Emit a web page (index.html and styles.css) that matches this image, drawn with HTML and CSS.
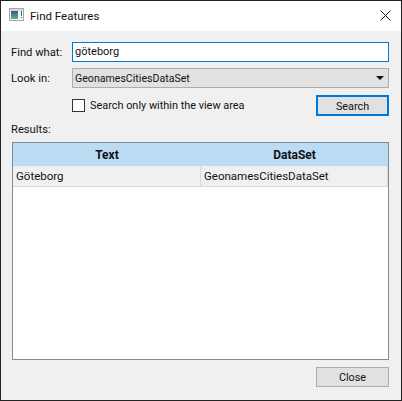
FILE: index.html
```html
<!DOCTYPE html>
<html lang="en">
<head>
    <meta charset="UTF-8">
    <meta name="viewport" content="width=device-width, initial-scale=1.0">
    <title>Find Features</title>
    <link rel="stylesheet" href="styles.css">
</head>
<body>
    <div class="window">
        <div class="titlebar">
            <svg class="app-icon" width="16" height="14" viewBox="0 0 16 14">
                <defs>
                    <linearGradient id="icon-fill" x1="0" y1="0" x2="0" y2="1">
                        <stop offset="0" stop-color="#3a5a72"/>
                        <stop offset="1" stop-color="#5fb59a"/>
                    </linearGradient>
                </defs>
                <rect x="0.5" y="0.5" width="14" height="12" fill="#f4f4f4" stroke="#a8a8a8"/>
                <rect x="1" y="1" width="13" height="2" fill="#d8d8d8"/>
                <rect x="2" y="3" width="7" height="8" fill="url(#icon-fill)"/>
                <rect x="12" y="3" width="1" height="5" fill="#2f6fa8"/>
                <rect x="12" y="9" width="1" height="1" fill="#2f6fa8"/>
            </svg>
            <span class="title">Find Features</span>
            <svg class="close-x" width="11" height="11" viewBox="0 0 11 11">
                <path d="M0.5 0.5L10.5 10.5M10.5 0.5L0.5 10.5" stroke="#111" stroke-width="1" fill="none"/>
            </svg>
        </div>
        <div class="content">
            <div class="form-row">
                <label class="form-label">Find what:</label>
                <div class="text-input">göteborg</div>
            </div>
            <div class="form-row">
                <label class="form-label">Look in:</label>
                <div class="combo">
                    <span>GeonamesCitiesDataSet</span>
                    <span class="combo-arrow"></span>
                </div>
            </div>
            <div class="options-row">
                <div class="checkbox"></div>
                <span class="checkbox-label">Search only within the view area</span>
                <button class="btn btn-default">Search</button>
            </div>
            <div class="results-label">Results:</div>
            <div class="table">
                <div class="table-head">
                    <div class="col-text">Text</div>
                    <div class="col-dataset">DataSet</div>
                </div>
                <div class="table-row">
                    <div class="col-text">Göteborg</div>
                    <div class="col-dataset">GeonamesCitiesDataSet</div>
                </div>
            </div>
            <div class="footer">
                <button class="btn">Close</button>
            </div>
        </div>
    </div>
</body>
</html>
```

FILE: styles.css
```css
html, body {
    margin: 0;
    padding: 0;
}
body {
    font-family: Roboto, "Open Sans", sans-serif;
    font-size: 11.5px;
    color: #111;
}
.window {
    width: 402px;
    height: 401px;
    box-sizing: border-box;
    border: 1px solid #222;
    display: flex;
    flex-direction: column;
    background: #f0f0f0;
}
.titlebar {
    height: 30px;
    background: #fff;
    display: flex;
    align-items: center;
    padding: 0 10px 0 8px;
    flex-shrink: 0;
}
.app-icon {
    margin-right: 5px;
    margin-bottom: 2px;
}
.title {
    flex: 1;
}
.close-x {
    margin-bottom: 1px;
}
.content {
    flex: 1;
    display: flex;
    flex-direction: column;
    padding: 11px 12px 13px 11px;
}
.form-row {
    display: flex;
    align-items: center;
    height: 20px;
    margin-bottom: 6px;
}
.form-label {
    width: 61px;
    margin-left: -1px;
    flex-shrink: 0;
    font-size: 11.2px;
}
.text-input {
    flex: 1;
    height: 20px;
    box-sizing: border-box;
    border: 1px solid #0078d7;
    background: #fff;
    padding-left: 2px;
    line-height: 17px;
    font-size: 11px;
}
.combo {
    flex: 1;
    height: 20px;
    box-sizing: border-box;
    border: 1px solid #adadad;
    background: #e1e1e1;
    padding: 0 4px 0 2px;
    display: flex;
    align-items: center;
    justify-content: space-between;
    font-size: 10.6px;
}
.combo-arrow {
    width: 0;
    height: 0;
    border-left: 4px solid transparent;
    border-right: 4px solid transparent;
    border-top: 4px solid #111;
}
.options-row {
    display: flex;
    align-items: center;
    padding-left: 60px;
    height: 21px;
    margin-top: 1px;
}
.checkbox {
    width: 13px;
    height: 13px;
    box-sizing: border-box;
    border: 1px solid #333;
    background: #fff;
    margin-right: 5px;
}
.checkbox-label {
    flex: 1;
    font-size: 10.9px;
}
.btn {
    width: 73px;
    height: 20px;
    box-sizing: border-box;
    border: 1px solid #adadad;
    background: #e1e1e1;
    font: inherit;
    font-size: 10.8px;
    color: inherit;
    padding: 1px 0 0;
}
.btn-default {
    height: 21px;
    border: 2px solid #0078d7;
}
.results-label {
    margin: 6px 0 0 -1px;
    height: 20px;
    line-height: 16px;
    font-size: 11.2px;
}
.table {
    flex: 1;
    box-sizing: border-box;
    border: 1px solid #828790;
    background: #fff;
}
.table-head {
    display: flex;
    height: 23px;
    line-height: 24px;
    background: #bcdcf3;
    font-weight: 700;
    font-size: 12px;
    text-align: center;
}
.table-row {
    display: flex;
    height: 21px;
    line-height: 20px;
    box-sizing: border-box;
    background: #f0f0f0;
    border-bottom: 1px solid #d9d9d9;
}
.col-text {
    width: 188px;
}
.col-dataset {
    flex: 1;
}
.table-row .col-text {
    padding-left: 3px;
    box-sizing: border-box;
    border-right: 1px solid #d9d9d9;
}
.table-row .col-dataset {
    padding-left: 3px;
    border-right: 1px solid #d9d9d9;
}
.footer {
    display: flex;
    justify-content: flex-end;
    margin-top: 7px;
}
```
